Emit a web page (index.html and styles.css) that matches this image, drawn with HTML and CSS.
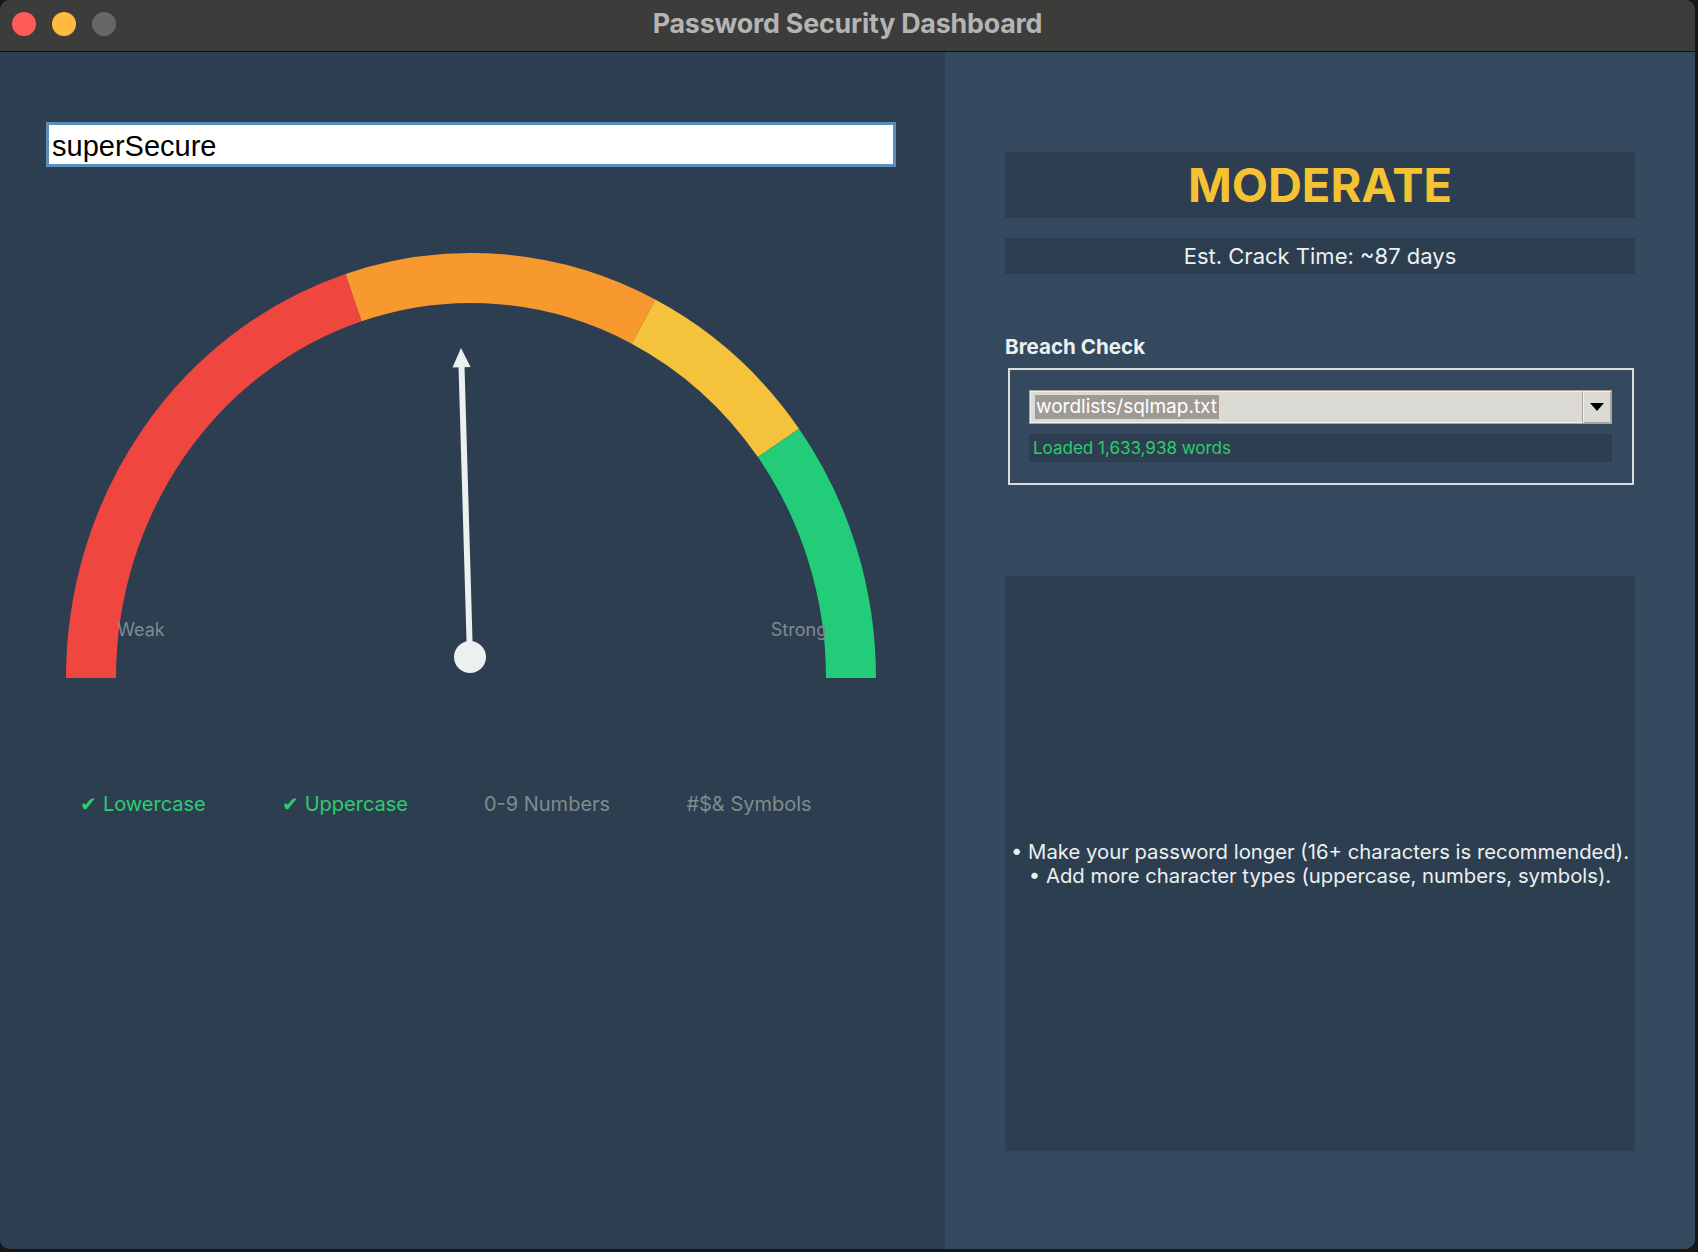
FILE: index.html
```html
<!DOCTYPE html>
<html>
<head>
<meta charset="utf-8">
<title>Password Security Dashboard</title>
<link rel="stylesheet" href="styles.css">
</head>
<body>
<div class="window">
  <div class="titlebar">
    <div class="lights">
      <span class="light red"></span>
      <span class="light yellow"></span>
      <span class="light gray"></span>
    </div>
    <div class="title">Password Security Dashboard</div>
  </div>
  <div class="content">
    <div class="left">
      <div class="entry">superSecure</div>
      <svg class="gauge" width="945" height="610" viewBox="0 0 945 610">
        <path d="M 91 511 A 380 400 0 0 1 353.57 130.58" fill="none" stroke="#ef4640" stroke-width="50"/>
        <path d="M 353.57 130.58 A 380 400 0 0 1 643.52 154.60" fill="none" stroke="#f7992e" stroke-width="50"/>
        <path d="M 643.52 154.60 A 380 400 0 0 1 778.43 275.89" fill="none" stroke="#f5c23b" stroke-width="50"/>
        <path d="M 778.43 275.89 A 380 400 0 0 1 851 511" fill="none" stroke="#22cc78" stroke-width="50"/>
        <text x="141" y="469" class="glabel" text-anchor="middle">Weak</text>
        <text x="799" y="469" class="glabel" text-anchor="middle">Strong</text>
        <line x1="470" y1="490" x2="461.5" y2="199" stroke="#ecf0f1" stroke-width="6"/>
        <polygon points="461,181 470.5,200 452.5,200.5" fill="#ecf0f1"/>
        <circle cx="470" cy="490" r="16" fill="#ecf0f1"/>
      </svg>
      <div class="features">
        <div class="feat on">✔ Lowercase</div>
        <div class="feat on">✔ Uppercase</div>
        <div class="feat">0-9 Numbers</div>
        <div class="feat">#$&amp; Symbols</div>
      </div>
    </div>
    <div class="right">
      <div class="strength">MODERATE</div>
      <div class="crack">Est. Crack Time: ~87 days</div>
      <div class="breach-label">Breach Check</div>
      <div class="breach-frame">
        <div class="combo">
          <div class="combo-field"><span class="combo-sel">wordlists/sqlmap.txt</span></div>
          <div class="combo-btn"><span class="arrow"></span></div>
        </div>
        <div class="loaded">Loaded 1,633,938 words</div>
      </div>
      <div class="tips">
        <div>• Make your password longer (16+ characters is recommended).</div>
        <div>• Add more character types (uppercase, numbers, symbols).</div>
      </div>
    </div>
  </div>
</div>
</body>
</html>
```

FILE: styles.css
```css
html, body {
  margin: 0;
  padding: 0;
  background: #161616;
}
body {
  width: 1698px;
  height: 1252px;
  overflow: hidden;
  font-family: Inter, "Liberation Sans", sans-serif;
}
.window {
  width: 1695px;
  height: 1249px;
  border-radius: 10px;
  overflow: hidden;
  display: flex;
  flex-direction: column;
  background: #34495e;
}
.titlebar {
  height: 51px;
  border-bottom: 1px solid #111;
  background: #3c3d3b;
  position: relative;
  display: flex;
  align-items: center;
  justify-content: center;
}
.lights {
  position: absolute;
  left: 12px;
  top: 12px;
  display: flex;
  gap: 16px;
}
.light {
  width: 24px;
  height: 24px;
  border-radius: 50%;
  display: block;
}
.light.red { background: #ff5a57; }
.light.yellow { background: #febb3f; }
.light.gray { background: #676767; }
.title {
  color: #b4b4b4;
  font-weight: 700;
  font-size: 26.8px;
  margin-top: -6px;
  letter-spacing: -0.2px;
}
.content {
  flex: 1;
  display: flex;
}
.left {
  width: 945px;
  background: #2c3e50;
  display: flex;
  flex-direction: column;
}
.entry {
  margin: 70px 0 0 46px;
  width: 844px;
  height: 39px;
  background: #fff;
  border: 3px solid #5b8fbb;
  font-family: "Liberation Sans", Arial, sans-serif;
  font-size: 29px;
  line-height: 43px;
  text-indent: 3px;
  color: #000;
  overflow: hidden;
}
.gauge {
  display: block;
}
.glabel {
  font-family: Inter, "Liberation Sans", sans-serif;
  font-size: 18px;
  fill: #7f8c8d;
}
.features {
  display: flex;
  padding-left: 42px;
  height: 54px;
  align-items: center;
}
.feat {
  width: 202px;
  text-align: center;
  font-size: 20px;
  color: #7f8c8d;
}
.feat.on {
  color: #2ecc71;
}
.right {
  flex: 1;
  background: #34495e;
  padding: 100px 0 0 60px;
  display: flex;
  flex-direction: column;
}
.strength {
  width: 630px;
  height: 66px;
  background: #2c3e50;
  color: #f5c232;
  font-weight: 700;
  font-size: 47px;
  line-height: 66px;
  text-align: center;
}
.crack {
  margin-top: 20px;
  width: 630px;
  height: 36px;
  background: #2c3e50;
  color: #ecf0f1;
  font-size: 22px;
  line-height: 36px;
  text-align: center;
}
.breach-label {
  margin-top: 61px;
  color: #ecf0f1;
  font-weight: 700;
  font-size: 20.6px;
  line-height: 24px;
}
.breach-frame {
  margin: 9px 0 0 3px;
  width: 583px;
  height: 75px;
  border: 2px solid #d8dcdf;
  padding: 20px 20px 18px 19px;
  display: flex;
  flex-direction: column;
}
.combo {
  display: flex;
  height: 34px;
  background: #dcdad5;
  border: 1px solid #a9a59e;
  box-sizing: border-box;
}
.combo-field {
  flex: 1;
  display: flex;
  align-items: center;
  padding-left: 4px;
  border: 1px solid #f4f3f0;
  border-right-color: #a9a59e;
}
.combo-sel {
  background: #9f9b94;
  color: #fff;
  font-size: 19px;
  line-height: 24px;
  padding: 0 2px 0 1px;
}
.combo-btn {
  width: 26px;
  display: flex;
  align-items: center;
  justify-content: center;
  border: 1px solid #f4f3f0;
  border-right-color: #a9a59e;
  border-bottom-color: #a9a59e;
}
.arrow {
  width: 0;
  height: 0;
  border-left: 7px solid transparent;
  border-right: 7px solid transparent;
  border-top: 8px solid #000;
}
.loaded {
  margin-top: 10px;
  height: 28px;
  background: #2c3e50;
  color: #2ecc71;
  font-size: 17px;
  line-height: 28px;
  padding-left: 4px;
}
.tips {
  margin-top: 91px;
  width: 630px;
  height: 575px;
  background: #2c3e50;
  color: #ecf0f1;
  font-size: 20.3px;
  line-height: 24px;
  text-align: center;
  display: flex;
  flex-direction: column;
  justify-content: center;
}
```
